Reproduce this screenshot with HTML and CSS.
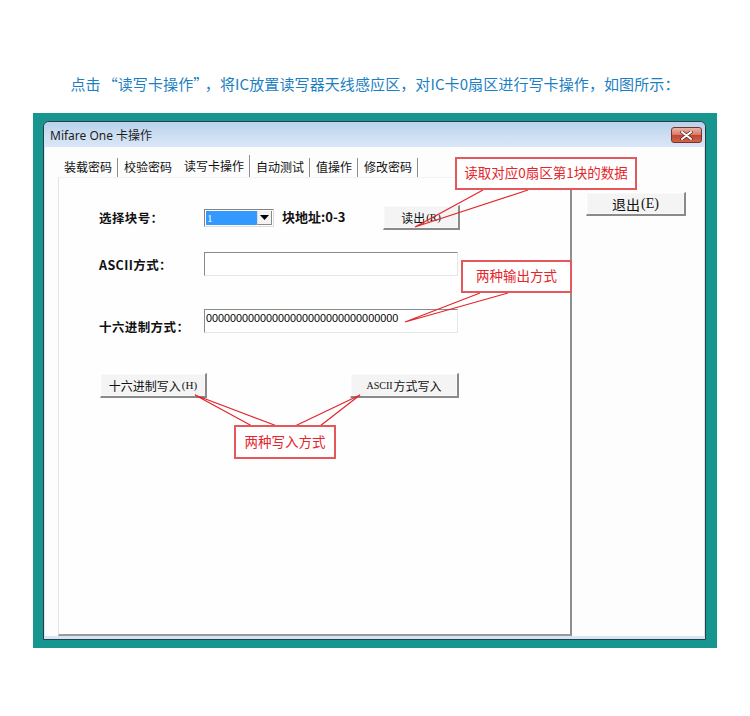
FILE: index.html
```html
<!DOCTYPE html>
<html lang="zh-CN">
<head>
<meta charset="utf-8">
<title>Mifare One 卡操作</title>
<link rel="stylesheet" href="styles.css">
</head>
<body>
<div class="page">
  <p class="caption">点击<span class="quote">“读写卡操作”</span>，将IC放置读写器天线感应区，对IC卡0扇区进行写卡操作，如图所示：</p>

  <div class="frame">
    <div class="window">
      <div class="titlebar">
        <span class="title">Mifare One 卡操作</span>
        <span class="close">
          <svg width="13" height="9" viewBox="0 0 13 9">
            <path d="M2 1 L11 8 M11 1 L2 8" stroke="#5a2620" stroke-width="3.4" stroke-linecap="round"/>
            <path d="M2 1 L11 8 M11 1 L2 8" stroke="#ffffff" stroke-width="2" stroke-linecap="round"/>
          </svg>
        </span>
      </div>

      <div class="client">
        <div class="tabarea">
          <div class="tabs">
            <span class="tab">装载密码</span>
            <span class="tab tab-before">校验密码</span>
            <span class="tab tab-on">读写卡操作</span>
            <span class="tab">自动测试</span>
            <span class="tab">值操作</span>
            <span class="tab">修改密码</span>
          </div>

          <div class="panel">
            <div class="row row-block">
              <span class="label">选择块号：</span>
              <span class="combo">
                <span class="combo-value">1</span>
                <span class="combo-arrow">
                  <svg width="9" height="5" viewBox="0 0 9 5"><path d="M0 0 H9 L4.5 5 Z" fill="#000"/></svg>
                </span>
              </span>
              <span class="addr">块地址:0-3</span>
              <span class="btn btn-read">读出<span class="latin">(R)</span></span>
            </div>

            <div class="row row-ascii">
              <span class="label">ASCII方式：</span>
              <span class="field"></span>
            </div>

            <div class="row row-hex">
              <span class="label label-low">十六进制方式：</span>
              <span class="field field-hex">00000000000000000000000000000000</span>
            </div>

            <div class="row row-write">
              <span class="btn btn-hex">十六进制写入<span class="latin">(H)</span></span>
              <span class="btn btn-ascii"><span class="latin">ASCII</span>方式写入</span>
            </div>
          </div>
        </div>

        <div class="side">
          <span class="btn btn-exit">退出<span class="latin">(E)</span></span>
        </div>
      </div>
    </div>
  </div>

  <!-- red leader lines from each note to the control it explains -->
  <svg class="leaders" width="750" height="716" viewBox="0 0 750 716">
    <g stroke="#e3262b" stroke-width="1.2" fill="none">
      <path d="M483 190 L415 227 M528 190 L415 227"/>
      <path d="M480 293 L405 322 M508 293 L405 322"/>
      <path d="M195 395 L252 426 M195 395 L277 426"/>
      <path d="M360 395 L295 426 M360 395 L320 426"/>
    </g>
  </svg>

  <div class="note note-read">读取对应0扇区第1块的数据</div>
  <div class="note note-out">两种输出方式</div>
  <div class="note note-write">两种写入方式</div>
</div>
</body>
</html>
```

FILE: styles.css
```css
* {
  box-sizing: border-box;
}

html, body {
  margin: 0;
  padding: 0;
  background: #ffffff;
}

.page {
  position: relative;
  width: 750px;
  height: 716px;
  overflow: hidden;
  font-family: "Noto Sans CJK SC", "Noto Sans", sans-serif;
}

.caption {
  margin: 0;
  padding-top: 74px;
  height: 94px;
  line-height: 20px;
  font-size: 15px;
  letter-spacing: 0.1px;
  color: #1c7fc2;
  text-align: center;
  white-space: nowrap;
}

.caption .quote {
  padding: 0 4px 0 2px;
}

/* teal backdrop around the dialog */
.frame {
  margin: 19px 0 0 33px;
  width: 684px;
  height: 535px;
  padding: 8px 11px 8px 10px;
  background: #17968f;
}

.window {
  width: 663px;
  height: 519px;
  border: 1px solid #2e3a44;
  border-radius: 6px 6px 0 0;
  background: #d4e6f4;
  display: flex;
  flex-direction: column;
  overflow: hidden;
}

.titlebar {
  height: 25px;
  flex: none;
  display: flex;
  align-items: center;
  justify-content: space-between;
  padding: 0 3px 0 6px;
  background: linear-gradient(#b9d1ec, #cfe0f3 60%, #d8e7f6);
  border-radius: 5px 5px 0 0;
}

.title {
  font-family: "Noto Sans", "Noto Sans CJK SC", sans-serif;
  font-size: 12px;
  color: #1e1e1e;
  padding-top: 1px;
}

.close {
  width: 31px;
  height: 16px;
  margin-top: 1px;
  border: 1px solid #7a3128;
  border-radius: 3px;
  background: linear-gradient(#eab4a6, #d77a68 48%, #c2452f 52%, #d1654c);
  display: flex;
  align-items: center;
  justify-content: center;
}

.client {
  flex: none;
  height: 489px;
  margin: 0 1px;
  background: #fdfdfd;
  display: flex;
}

.tabarea {
  padding: 8px 0 0 13px;
  display: flex;
  flex-direction: column;
}

.tabs {
  height: 22px;
  display: flex;
  align-items: stretch;
}

.tab {
  display: flex;
  align-items: center;
  padding: 0 5px 2px 6px;
  font-size: 12px;
  color: #111;
  border-right: 1px solid #8c8c8c;
  box-shadow: 1px 0 0 #ffffff;
  margin-top: 3px;
}

.tab-before {
  border-right: none;
  padding-right: 6px;
}

.tab-on {
  margin-top: 0;
  padding-bottom: 1px;
}

.panel {
  width: 514px;
  height: 459px;
  border-top: 1px solid #f2f2f2;
  border-left: 1px solid #e4e4e4;
  border-right: 2px solid #8e8e8e;
  border-bottom: 2px solid #9a9a9a;
  padding: 27px 0 0 40px;
  background: #fefefe;
}

.row {
  display: flex;
  align-items: center;
}

.label {
  width: 105px;
  flex: none;
  font-size: 12.5px;
  font-weight: bold;
  letter-spacing: 0.4px;
  color: #111;
  white-space: nowrap;
}

.label-low {
  align-self: flex-start;
  margin-top: 9px;
  line-height: 18px;
}

.row-block {
  height: 25px;
}

.combo {
  width: 70px;
  height: 18px;
  display: flex;
  border: 1px solid #828282;
  border-right-color: #dcdcdc;
  border-bottom-color: #dcdcdc;
  padding: 1px;
  background: #fff;
}

.combo-value {
  width: 51px;
  background: #3399ff;
  color: #ffffff;
  font-family: "Liberation Serif", serif;
  font-size: 11px;
  line-height: 14px;
  padding-left: 1px;
}

.combo-arrow {
  flex: 1;
  display: flex;
  align-items: center;
  justify-content: center;
  background: #f3f3f3;
  border-left: 1px solid #e0e0e0;
  border-right: 1px solid #8a8a8a;
  border-bottom: 1px solid #8a8a8a;
}

.addr {
  width: 101px;
  margin-left: 8px;
  font-size: 13px;
  font-weight: bold;
  color: #111;
  margin-top: -2px;
}

.btn {
  display: flex;
  align-items: center;
  justify-content: center;
  height: 25px;
  font-size: 12px;
  color: #111;
  background: #f4f4f4;
  border-top: 1px solid #ffffff;
  border-left: 1px solid #ffffff;
  border-right: 2px solid #8a8a8a;
  border-bottom: 2px solid #8a8a8a;
  box-shadow: inset 0 0 0 1px #f8f8f8;
  white-space: nowrap;
}

.latin {
  font-family: "Liberation Serif", serif;
  font-size: 11px;
  margin-left: 1px;
}

.btn-read {
  width: 77px;
}

.row-ascii {
  margin-top: 22px;
  height: 24px;
}

.field {
  width: 254px;
  height: 24px;
  background: #fff;
  border-top: 1px solid #8a8a8a;
  border-left: 1px solid #8a8a8a;
  border-right: 1px solid #e6e6e6;
  border-bottom: 1px solid #e6e6e6;
}

.row-hex {
  margin-top: 33px;
  height: 24px;
  align-items: flex-start;
}

.field-hex {
  font-family: "Liberation Sans", sans-serif;
  font-size: 10.8px;
  line-height: 16px;
  padding-left: 1px;
  color: #000;
}

.row-write {
  margin-top: 40px;
  padding-left: 1px;
}

.btn-hex {
  width: 107px;
}

.btn-ascii {
  width: 109px;
  margin-left: 143px;
}

.btn-ascii .latin {
  font-size: 10px;
  margin: 0 1px 0 0;
}

.side {
  padding: 45px 0 0 14px;
}

.btn-exit {
  width: 100px;
  height: 24px;
  font-size: 14px;
}

.btn-exit .latin {
  font-size: 14px;
}

/* annotation overlay */
.leaders {
  position: absolute;
  left: 0;
  top: 0;
  pointer-events: none;
}

.note {
  position: absolute;
  height: 33px;
  border: 2px solid #e4575b;
  background: #ffffff;
  color: #e5252b;
  font-size: 13.5px;
  display: flex;
  align-items: center;
  justify-content: center;
  padding-bottom: 4px;
  white-space: nowrap;
}

.note-read {
  left: 455px;
  top: 157px;
  width: 182px;
}

.note-out {
  left: 461px;
  top: 260px;
  width: 111px;
}

.note-write {
  left: 234px;
  top: 425px;
  width: 102px;
  height: 34px;
  padding-bottom: 2px;
}
```
